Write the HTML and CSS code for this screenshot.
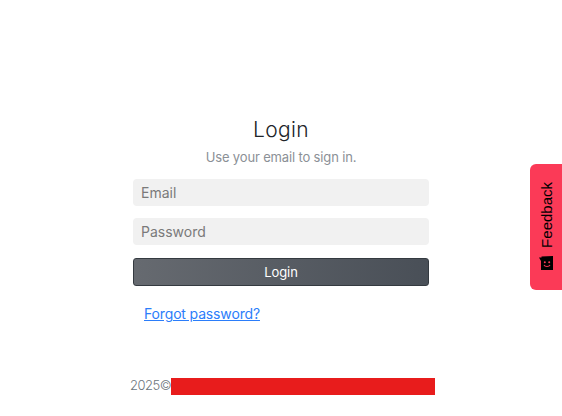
FILE: index.html
```html
<!DOCTYPE html>
<html lang="en">
<head>
  <meta charset="UTF-8">
  <meta name="viewport" content="width=device-width, initial-scale=1.0">
  <title>Login</title>
  <link rel="stylesheet" href="styles.css">
</head>
<body>
  <main class="login">
    <h1 class="login-title">Login</h1>
    <p class="login-subtitle">Use your email to sign in.</p>
    <form class="login-form">
      <input type="text" placeholder="Email">
      <input type="password" placeholder="Password">
      <button type="button">Login</button>
    </form>
    <a class="forgot-link" href="#">Forgot password?</a>
  </main>

  <footer class="footer">
    <span class="footer-year">2025©</span>
    <span class="footer-bar"></span>
  </footer>

  <a class="feedback-tab" href="#">
    <svg class="feedback-icon" viewBox="0 0 14 14" width="14" height="14">
      <path fill="#000" d="M0 1.5H2.5V0.5L14 0V14H2V5L0 1.5Z"/>
      <circle cx="5.8" cy="6.2" r="1" fill="#fb3a57"/>
      <circle cx="10.2" cy="6.2" r="1" fill="#fb3a57"/>
      <path d="M5 9C6 11 10 11 11 9" fill="none" stroke="#fb3a57" stroke-width="1.1"/>
    </svg>
    <span>Feedback</span>
  </a>
</body>
</html>
```

FILE: styles.css
```css
body {
  font-family: Inter, "Open Sans", sans-serif;
  margin: 0;
  padding: 0;
  background-color: #fff;
  height: 416px;
  overflow: hidden;
}

.login {
  width: 296px;
  margin: 0 auto;
  padding-top: 117px;
}

.login-title {
  margin: 0;
  font-size: 21px;
  line-height: 26px;
  font-weight: 300;
  letter-spacing: 0.4px;
  color: #212529;
  text-align: center;
}

.login-subtitle {
  margin: 5px 0 13px;
  font-size: 13px;
  line-height: 18px;
  letter-spacing: -0.15px;
  color: #8b9096;
  text-align: center;
}

.login-form {
  display: flex;
  flex-direction: column;
  gap: 12px;
}

input {
  height: 27px;
  padding: 0 8px;
  border: 0;
  border-radius: 4px;
  background: #f1f1f1;
  font-family: inherit;
  font-size: 14px;
  box-sizing: border-box;
}

input::placeholder {
  color: #7a7a7a;
  opacity: 1;
}

button {
  height: 28px;
  margin-top: 1px;
  border: 1px solid #343a40;
  border-radius: 3px;
  background: linear-gradient(90deg, #666a70, #494f57);
  color: #fff;
  font-family: inherit;
  font-size: 13px;
  letter-spacing: -0.1px;
}

.forgot-link {
  display: inline-block;
  margin: 19px 0 0 11px;
  font-size: 14px;
  line-height: 18px;
  letter-spacing: -0.15px;
  color: #2b7dfa;
}

.footer {
  display: flex;
  align-items: center;
  margin: 54px 0 0 130px;
  font-size: 13px;
  color: #6c757d;
}

.footer-year {
  width: 41px;
  padding-bottom: 2px;
  letter-spacing: -0.5px;
  font-weight: 300;
  white-space: nowrap;
}

.footer-bar {
  width: 264px;
  height: 17px;
  background: #e81c1c;
}

.feedback-tab {
  position: fixed;
  top: 164px;
  right: 0;
  width: 32px;
  height: 126px;
  display: flex;
  flex-direction: column-reverse;
  align-items: center;
  justify-content: flex-start;
  gap: 8px;
  padding: 0 0 20px;
  box-sizing: border-box;
  background: #fb3a57;
  border-radius: 6px 0 0 6px;
  color: #000;
  font-family: "Liberation Sans", Arial, sans-serif;
  font-size: 15px;
  text-decoration: none;
}

.feedback-tab span {
  writing-mode: vertical-rl;
  transform: rotate(180deg);
}
```
